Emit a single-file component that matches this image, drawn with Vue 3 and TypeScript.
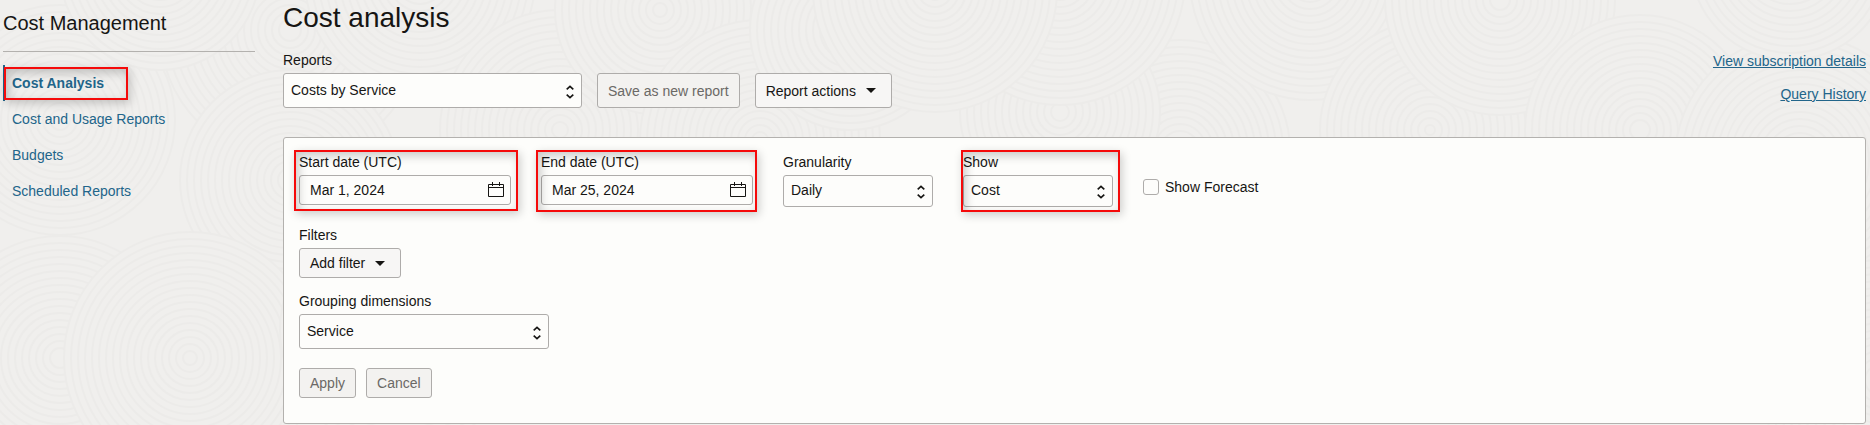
<script setup lang="ts">
import { ref } from 'vue'

interface Disc {
  x: number
  y: number
  r: number
}

const navItems = [
  { label: 'Cost Analysis', active: true },
  { label: 'Cost and Usage Reports', active: false },
  { label: 'Budgets', active: false },
  { label: 'Scheduled Reports', active: false },
]

const report = ref('Costs by Service')
const startDate = ref('Mar 1, 2024')
const endDate = ref('Mar 25, 2024')
const granularity = ref('Daily')
const show = ref('Cost')
const forecast = ref(false)
const grouping = ref('Service')

// Overlapping discs of concentric rings; later discs cover earlier ones.
const motif: Disc[] = [
  { x: 290, y: 30, r: 130 },
  { x: 60, y: 120, r: 115 },
  { x: 420, y: -20, r: 115 },
  { x: 290, y: 180, r: 110 },
  { x: 560, y: 130, r: 120 },
  { x: 60, y: 358, r: 122 },
  { x: 190, y: 358, r: 126 },
  { x: 400, y: 330, r: 120 },
  { x: 160, y: -30, r: 100 },
  { x: 660, y: 10, r: 105 },
  { x: 760, y: 140, r: 120 },
  { x: 850, y: 30, r: 100 },
  { x: 1180, y: 150, r: 110 },
  { x: 1060, y: 112, r: 100 },
  { x: 1060, y: -20, r: 125 },
  { x: 935, y: -10, r: 122 },
  { x: 1310, y: -20, r: 120 },
  { x: 1430, y: 130, r: 110 },
  { x: 1500, y: 0, r: 115 },
  { x: 1640, y: 130, r: 115 },
  { x: 1800, y: 160, r: 125 },
  { x: 1790, y: -40, r: 100 },
  { x: 1880, y: 380, r: 120 },
]

const rings = (disc: Disc): number[] => {
  const radii: number[] = []
  for (let r = disc.r; r > 4; r -= 7) radii.push(r)
  return radii
}
</script>

<template>
  <div class="page">
    <svg class="texture" aria-hidden="true">
      <g v-for="(disc, i) in motif" :key="i">
        <circle v-for="r in rings(disc)" :key="r" :cx="disc.x" :cy="disc.y" :r="r" />
      </g>
    </svg>

    <aside class="sidebar">
      <h2 class="sidebar-title">Cost Management</h2>
      <nav class="nav" aria-label="Cost Management">
        <a
          v-for="item in navItems"
          :key="item.label"
          href="#"
          class="nav-link"
          :class="{ active: item.active }"
          :aria-current="item.active ? 'page' : undefined"
        >
          {{ item.label }}
          <span v-if="item.active" class="marker marker-nav"></span>
        </a>
      </nav>
    </aside>

    <main class="main">
      <h1 class="title">Cost analysis</h1>

      <div class="toolbar">
        <div class="field report-field">
          <label for="report">Reports</label>
          <div class="select">
            <select id="report" v-model="report" class="control tall">
              <option>Costs by Service</option>
            </select>
            <svg class="updown" viewBox="0 0 8 14" aria-hidden="true">
              <path d="M.7 4.400 4 1.300 7.300 4.400M.7 9.600 4 12.700 7.300 9.600" />
            </svg>
          </div>
        </div>
        <button type="button" class="btn tall" disabled>Save as new report</button>
        <button type="button" class="btn tall menu">
          Report actions
          <svg class="caret" viewBox="0 0 10 5" aria-hidden="true"><path d="M0 0h10L5 5z" /></svg>
        </button>
        <div class="links">
          <a href="#">View subscription details</a>
          <a href="#">Query History</a>
        </div>
      </div>

      <section class="panel">
        <div class="row">
          <div class="field date-field">
            <label for="start">Start date (UTC)</label>
            <div class="date">
              <input id="start" v-model="startDate" type="text" class="control" />
              <button type="button" class="calendar" aria-label="Choose start date">
                <svg viewBox="0 0 16 16" aria-hidden="true">
                  <path d="M.5 2.500h15v12H.5zM.5 5.500h15M4.500 0v4M11.500 0v4" />
                </svg>
              </button>
            </div>
            <span class="marker marker-start"></span>
          </div>
          <div class="field date-field">
            <label for="end">End date (UTC)</label>
            <div class="date">
              <input id="end" v-model="endDate" type="text" class="control" />
              <button type="button" class="calendar" aria-label="Choose end date">
                <svg viewBox="0 0 16 16" aria-hidden="true">
                  <path d="M.5 2.500h15v12H.5zM.5 5.500h15M4.500 0v4M11.500 0v4" />
                </svg>
              </button>
            </div>
            <span class="marker marker-end"></span>
          </div>
          <div class="field short-field">
            <label for="granularity">Granularity</label>
            <div class="select">
              <select id="granularity" v-model="granularity" class="control medium">
                <option>Daily</option>
                <option>Monthly</option>
              </select>
              <svg class="updown" viewBox="0 0 8 14" aria-hidden="true">
                <path d="M.7 4.400 4 1.300 7.300 4.400M.7 9.600 4 12.700 7.300 9.600" />
              </svg>
            </div>
          </div>
          <div class="field short-field">
            <label for="show">Show</label>
            <div class="select">
              <select id="show" v-model="show" class="control medium">
                <option>Cost</option>
                <option>Usage</option>
              </select>
              <svg class="updown" viewBox="0 0 8 14" aria-hidden="true">
                <path d="M.7 4.400 4 1.300 7.300 4.400M.7 9.600 4 12.700 7.300 9.600" />
              </svg>
            </div>
            <span class="marker marker-show"></span>
          </div>
          <label class="check">
            <input v-model="forecast" type="checkbox" />
            Show Forecast
          </label>
        </div>

        <div class="field filters">
          <span id="filters-label">Filters</span>
          <button type="button" class="btn menu" aria-describedby="filters-label">
            Add filter
            <svg class="caret" viewBox="0 0 10 5" aria-hidden="true"><path d="M0 0h10L5 5z" /></svg>
          </button>
        </div>

        <div class="field grouping">
          <label for="grouping">Grouping dimensions</label>
          <div class="select">
            <select id="grouping" v-model="grouping" class="control tall">
              <option>Service</option>
            </select>
            <svg class="updown" viewBox="0 0 8 14" aria-hidden="true">
              <path d="M.7 4.400 4 1.300 7.300 4.400M.7 9.600 4 12.700 7.300 9.600" />
            </svg>
          </div>
        </div>

        <div class="actions">
          <button type="button" class="btn" disabled>Apply</button>
          <button type="button" class="btn" disabled>Cancel</button>
        </div>
      </section>
    </main>
  </div>
</template>

<style>
body {
  background: #f0efed;
}
</style>

<style scoped>
.page,
.page * {
  box-sizing: border-box;
}
.page {
  position: relative;
  display: flex;
  gap: 28px;
  min-height: 100vh;
  padding: 0 4px 0 3px;
  background: #f0efed;
  color: #161513;
  font-family: 'Liberation Sans', Arial, sans-serif;
  font-size: 14px;
  line-height: 20px;
}
.texture {
  position: absolute;
  inset: 0;
  width: 100%;
  height: 100%;
}
.texture circle {
  fill: #f0efed;
  stroke: #ecebe9;
  stroke-width: 2px;
}
.sidebar {
  position: relative;
  flex: 0 0 252px;
  padding-top: 11px;
}
.sidebar-title {
  margin: 0 0 13px;
  padding-bottom: 16px;
  border-bottom: 1px solid #b3b1ae;
  font-size: 20px;
  font-weight: 400;
  line-height: 24px;
}
.nav {
  display: flex;
  flex-direction: column;
}
.nav-link {
  position: relative;
  padding: 8px 0 8px 9px;
  color: #22658a;
  text-decoration: none;
}
.nav-link.active {
  padding-left: 7px;
  border-left: 2px solid #22658a;
  font-weight: 700;
}
.main {
  position: relative;
  flex: 1;
  min-width: 0;
}
.title {
  margin: 0 0 14px;
  font-size: 28px;
  font-weight: 400;
  line-height: 36px;
}
.toolbar {
  display: flex;
  align-items: flex-end;
  gap: 15px;
  margin-bottom: 29px;
}
.field {
  position: relative;
  display: flex;
  flex-direction: column;
  gap: 3px;
}
.report-field {
  width: 299px;
}
.date-field {
  width: 212px;
}
.short-field {
  width: 150px;
}
.select,
.date {
  position: relative;
  display: flex;
}
.control {
  width: 100%;
  height: 30px;
  margin: 0;
  padding: 0 30px 0 10px;
  border: 1px solid #aeacaa;
  border-radius: 3px;
  appearance: none;
  background: #fdfdfb;
  color: inherit;
  font: inherit;
}
select.control {
  padding-bottom: 2px;
  padding-left: 7px;
}
.control.medium {
  height: 32px;
}
.control.tall {
  height: 35px;
}
.updown {
  position: absolute;
  top: 50%;
  right: 8px;
  width: 8px;
  height: 14px;
  margin-top: -6px;
  fill: none;
  stroke: #161513;
  stroke-width: 1.6;
  pointer-events: none;
}
.calendar {
  position: absolute;
  top: 7px;
  right: 7px;
  width: 16px;
  height: 16px;
  padding: 0;
  border: 0;
  background: none;
}
.calendar svg {
  display: block;
  width: 16px;
  height: 16px;
  fill: none;
  stroke: #161513;
  stroke-width: 1px;
}
.btn {
  display: inline-flex;
  align-items: center;
  height: 30px;
  padding: 0 10px;
  border: 1px solid #aeacaa;
  border-radius: 3px;
  background: #f7f6f5;
  color: #161513;
  font: inherit;
  white-space: nowrap;
}
.btn.tall {
  height: 35px;
}
.btn:disabled {
  background: #f3f2f0;
  color: #6b6966;
}
.btn.menu {
  gap: 10px;
  padding-right: 15px;
}
.caret {
  width: 10px;
  height: 5px;
  fill: #161513;
}
.links {
  display: flex;
  flex-direction: column;
  align-items: flex-end;
  align-self: flex-start;
  gap: 13px;
  margin-left: auto;
  padding-top: 1px;
}
.links a {
  color: #22658a;
  text-decoration: underline;
}
.panel {
  padding: 14px 15px 25px;
  border: 1px solid #b3b1ae;
  border-radius: 3px;
  background: #fdfdfb;
}
.row {
  display: flex;
  align-items: flex-start;
  gap: 30px;
  margin-bottom: 18px;
}
.check {
  display: flex;
  align-items: center;
  gap: 6px;
  padding-top: 25px;
}
.check input {
  width: 16px;
  height: 16px;
  margin: 0;
  border: 1px solid #aeacaa;
  border-radius: 3px;
  appearance: none;
  background: #fdfdfb;
}
.check input:checked {
  background: #22658a;
}
.filters {
  align-items: flex-start;
  margin-bottom: 13px;
}
.grouping {
  width: 250px;
  margin-bottom: 19px;
}
.actions {
  display: flex;
  gap: 10px;
}
.marker {
  position: absolute;
  border: 2px solid #f50a0a;
  box-shadow:
    2px 3px 9px rgba(0, 0, 0, 0.2),
    inset 3px 4px 10px rgba(0, 0, 0, 0.2);
  pointer-events: none;
}
.marker-nav {
  top: 2px;
  left: -1px;
  width: 124px;
  height: 33px;
}
.marker-start {
  top: -2px;
  left: -5px;
  width: 224px;
  height: 61px;
}
.marker-end {
  top: -2px;
  left: -5px;
  width: 221px;
  height: 62px;
}
.marker-show {
  top: -2px;
  left: -2px;
  width: 159px;
  height: 62px;
}
</style>
